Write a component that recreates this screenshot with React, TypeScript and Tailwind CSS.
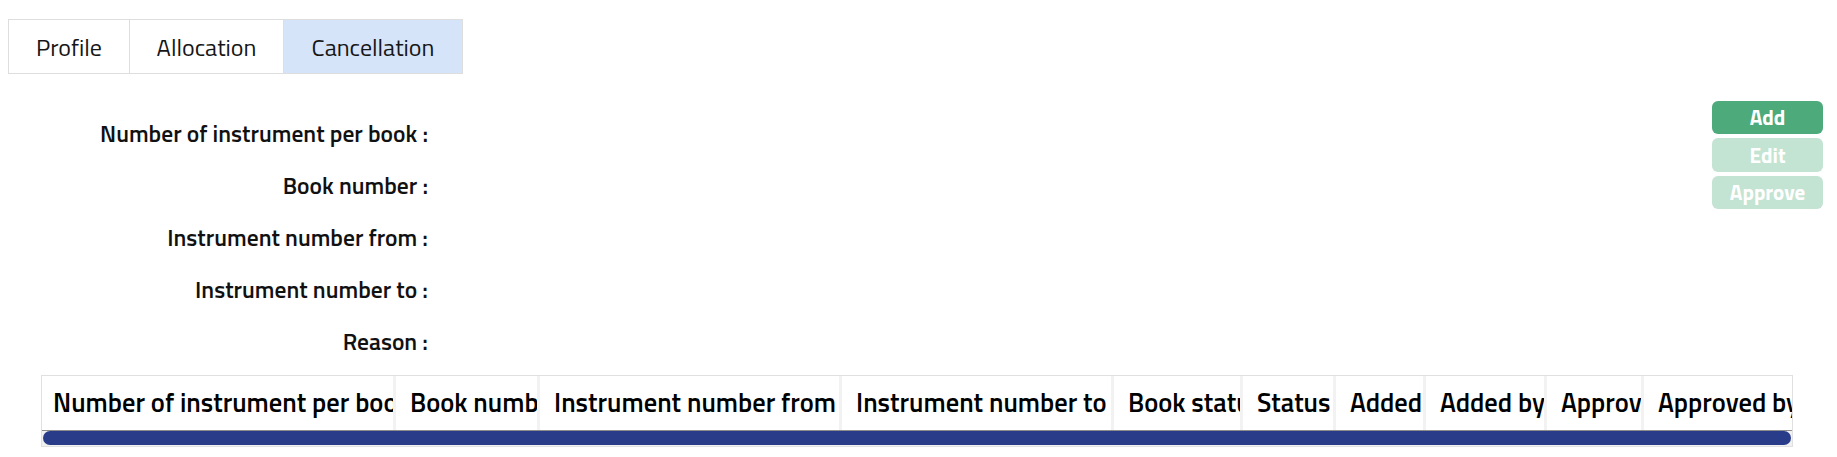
import React from "react";

const font = { fontFamily: '"Titillium Web", Roboto, "Liberation Sans", sans-serif' };

const tabs = [
  { label: "Profile", width: "w-[120px]", active: false },
  { label: "Allocation", width: "w-[154px]", active: false },
  { label: "Cancellation", width: "w-[179px]", active: true },
];

const labels = [
  "Number of instrument per book :",
  "Book number :",
  "Instrument number from :",
  "Instrument number to :",
  "Reason :",
];

const columns = [
  { title: "Number of instrument per book", width: "w-[351px]" },
  { title: "Book number", width: "w-[144px]" },
  { title: "Instrument number from", width: "w-[302px]" },
  { title: "Instrument number to", width: "w-[272px]" },
  { title: "Book status", width: "w-[129px]" },
  { title: "Status", width: "w-[93px]" },
  { title: "Added", width: "w-[90px]" },
  { title: "Added by", width: "w-[121px]" },
  { title: "Approved", width: "w-[97px]" },
  { title: "Approved by", width: "w-[190px]" },
];

function Tabs() {
  return (
    <div className="flex w-fit border border-[#dedede]">
      {tabs.map((t, i) => (
        <div
          key={t.label}
          className={`${t.width} h-[53px] flex items-center justify-center text-[24px] text-[#161616] ${
            i > 0 ? "border-l border-[#dedede]" : ""
          } ${t.active ? "bg-[#d6e4fa]" : "bg-white"}`}
        >
          {t.label}
        </div>
      ))}
    </div>
  );
}

function ActionButtons() {
  return (
    <div className="flex flex-col gap-[4px] w-[111px]">
      <button className="h-[33px] rounded-[6px] bg-[#4caa7b] text-white font-bold text-[21px] leading-none">
        Add
      </button>
      <button disabled className="h-[34px] rounded-[6px] bg-[#c3e3d3] text-white font-bold text-[21px] leading-none">
        Edit
      </button>
      <button disabled className="h-[33px] rounded-[6px] bg-[#c3e3d3] text-white font-bold text-[21px] leading-none">
        Approve
      </button>
    </div>
  );
}

export default function App() {
  return (
    <div className="w-[1837px] h-[457px] bg-white overflow-hidden pt-[19px]" style={font}>
      <div className="pl-[8px]">
        <Tabs />
      </div>

      <div className="flex justify-between mt-[27px] pr-[14px]">
        <div className="w-[428px] pt-[7px] flex flex-col text-right">
          {labels.map((l) => (
            <div key={l} className="h-[52px] flex items-center justify-end text-[23.5px] font-semibold text-[#111]">
              {l}
            </div>
          ))}
        </div>
        <ActionButtons />
      </div>

      <div className="mt-[7px] ml-[41px] w-[1752px] border border-[#e0e0e0] overflow-hidden">
        <div className="flex h-[54px]">
          {columns.map((c, i) => (
            <div
              key={c.title}
              className={`${c.width} shrink-0 h-full flex items-center overflow-hidden whitespace-nowrap text-[26.5px] font-semibold text-black ${
                i > 0 ? "border-l-[3px] border-[#f2f2f2] pl-[14px]" : "pl-[11px]"
              }`}
            >
              {c.title}
            </div>
          ))}
        </div>
        <div className="h-[16px] border-t border-[#8c8c8c] bg-[#f1f1f1] px-[1px] pb-[1px]">
          <div className="h-full w-full rounded-full bg-[#283c8a]" />
        </div>
      </div>
    </div>
  );
}
